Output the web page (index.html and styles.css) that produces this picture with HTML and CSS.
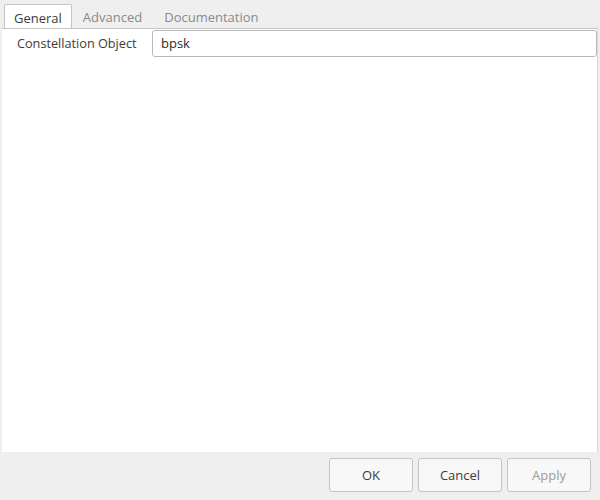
FILE: index.html
```html
<!DOCTYPE html>
<html lang="en">
<head>
    <meta charset="UTF-8">
    <title>Block Properties</title>
    <link rel="stylesheet" href="styles.css">
</head>
<body>
    <div class="dialog">
        <div class="tabs">
            <div class="tab active">General</div>
            <div class="tab">Advanced</div>
            <div class="tab">Documentation</div>
        </div>
        <div class="panel">
            <div class="param-row">
                <label class="param-label">Constellation Object</label>
                <div class="param-input">bpsk</div>
            </div>
        </div>
        <div class="buttons">
            <button class="btn">OK</button>
            <button class="btn">Cancel</button>
            <button class="btn disabled">Apply</button>
        </div>
    </div>
</body>
</html>
```

FILE: styles.css
```css
html, body {
    margin: 0;
    padding: 0;
}
body {
    width: 600px;
    height: 500px;
    background: #efefef;
    font-family: "Open Sans", "Noto Sans", sans-serif;
    font-size: 12.7px;
    color: #3c3c3c;
    overflow: hidden;
}
.dialog {
    display: flex;
    flex-direction: column;
    height: 500px;
}
.tabs {
    display: flex;
    padding: 4px 0 0 4px;
    height: 24px;
}
.tab {
    padding: 0 11px;
    line-height: 26px;
    font-size: 13px;
    color: #8a8a8a;
}
.active {
    background: #fff;
    color: #3c3c3c;
    border: 1px solid #c4c4c4;
    border-bottom: none;
    border-radius: 2px 2px 0 0;
    height: 25px;
    padding: 0 9px;
}
.panel {
    background: #fff;
    margin: 0 2px;
    height: 424px;
    border-top: 1px solid #c4c4c4;
    border-right: 1px solid #d8d8d8;
    box-sizing: border-box;
    padding: 1px 0 0 15px;
}
.param-row {
    display: flex;
    align-items: flex-start;
}
.param-label {
    width: 135px;
    line-height: 26px;
}
.param-input {
    flex: 1;
    height: 27px;
    box-sizing: border-box;
    border: 1px solid #b9b9b9;
    border-radius: 3px;
    padding: 0 8px;
    line-height: 25px;
    color: #2a2a2a;
    font-size: 13px;
}
.buttons {
    display: flex;
    justify-content: flex-end;
    gap: 5px;
    padding: 6px 9px 0 0;
}
.btn {
    width: 84px;
    height: 34px;
    background: #f8f8f8;
    border: 1px solid #c4c4c4;
    border-radius: 3px;
    font-family: inherit;
    font-size: 13px;
    color: #3c3c3c;
}
.disabled {
    color: #9a9a9a;
}
```
